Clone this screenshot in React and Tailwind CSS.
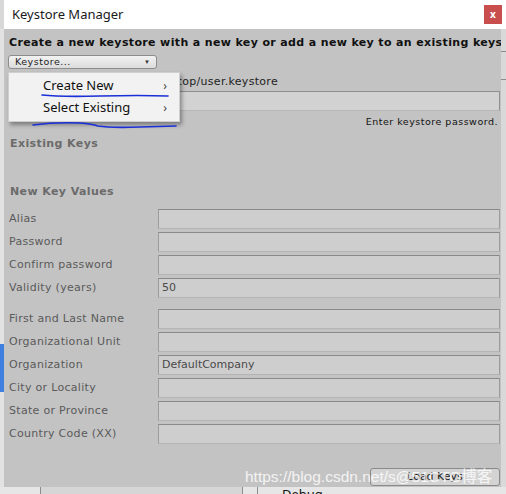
import React from 'react';

const LABEL_FONT = { fontFamily: '"DejaVu Sans", Verdana, sans-serif' };
const UI_FONT = { fontFamily: '"Noto Sans", "Open Sans", sans-serif' };

const Field = ({ value }) => (
    <div className="w-[342px] h-[20px] bg-[#cecece] border border-[#9c9c9c] border-t-[#8a8a8a] border-b-[#b4b4b4] flex items-center px-[3px] text-[11px] text-[#4a4a4a]" style={LABEL_FONT}>
        {value}
    </div>
);

const Row = ({ label, value }) => (
    <div className="flex items-center h-[20px]">
        <div className="w-[149px] text-[11px] text-[#5a5a5a] tracking-[0.3px]" style={LABEL_FONT}>{label}</div>
        <Field value={value} />
    </div>
);

const App = () => {
    return (
        <div className="relative w-[506px] h-[494px] overflow-hidden bg-[#e4e4e4] flex flex-col">
            <div className="flex flex-1">
                {/* left strip of the app behind */}
                <div className="w-[4px] flex flex-col">
                    <div className="h-[29px] bg-[#d8d8d8]" />
                    <div className="flex-1 bg-[#e2e2e2] flex flex-col">
                        <div className="h-[315px]" />
                        <div className="h-[48px] bg-[#3f7fe0]" />
                    </div>
                </div>

                {/* window */}
                <div className="flex-1 flex flex-col">
                    <div className="h-[29px] bg-white flex items-center justify-between pl-[8px] pr-[4px]">
                        <span className="text-[13px] text-[#1a1a1a]" style={UI_FONT}>Keystore Manager</span>
                        <div className="w-[18px] h-[19px] bg-[#c94f4f] flex items-center justify-center text-white text-[10px] font-bold leading-none pb-[1px]" style={UI_FONT}>x</div>
                    </div>
                    <div className="flex flex-1">
                        <div className="w-[497px] bg-[#c3c3c3] flex flex-col pl-[5px] overflow-hidden">
                            <div className="mt-[7px] h-[14px] flex items-center whitespace-nowrap text-[11px] font-bold text-[#111] tracking-[0.36px]" style={LABEL_FONT}>
                                Create a new keystore with a new key or add a new key to an existing keystore
                            </div>
                            <div className="mt-[5px] ml-[-1px] w-[149px] h-[14px] rounded-[3px] border border-[#8d8d8d] bg-gradient-to-b from-[#f2f2f2] to-[#dcdcdc] flex items-center justify-between px-[6px]">
                                <span className="text-[9.5px] text-[#222] tracking-[0.5px]" style={LABEL_FONT}>Keystore...</span>
                                <span className="text-[6px] text-[#333]">▼</span>
                            </div>
                            <div className="mt-[7px] h-[13px] w-[269px] flex items-center justify-end whitespace-nowrap text-[11px] text-[#1e1e1e] tracking-[0.3px]" style={LABEL_FONT}>
                                C:/Users/Desktop/user.keystore
                            </div>
                            <div className="mt-[2px] ml-[149px] w-[342px] h-[20px] bg-[#d2d2d2] border border-[#8f8f8f] border-b-[#b8b8b8]" />
                            <div className="mt-[4px] w-[489px] text-right text-[9.5px] text-[#111] tracking-[0.5px]" style={LABEL_FONT}>Enter keystore password.</div>
                            <div className="mt-[7px] ml-[1px] text-[11px] font-bold text-[#6b6b6b] tracking-[0.4px]" style={LABEL_FONT}>Existing Keys</div>
                            <div className="mt-[31px] ml-[1px] text-[11px] font-bold text-[#6b6b6b] tracking-[0.4px]" style={LABEL_FONT}>New Key Values</div>
                            <div className="mt-[9px] flex flex-col gap-[3px]">
                                <Row label="Alias" />
                                <Row label="Password" />
                                <Row label="Confirm password" />
                                <Row label="Validity (years)" value="50" />
                            </div>
                            <div className="mt-[11px] flex flex-col gap-[3px]">
                                <Row label="First and Last Name" />
                                <Row label="Organizational Unit" />
                                <Row label="Organization" value="DefaultCompany" />
                                <Row label="City or Locality" />
                                <Row label="State or Province" />
                                <Row label="Country Code (XX)" />
                            </div>
                            <div className="mt-[24px] ml-[361px] w-[130px] h-[18px] rounded-[3px] border border-[#8a8a8a] bg-[#d3d3d3] flex items-center justify-center text-[11px] text-[#222]" style={LABEL_FONT}>
                                Load Keys
                            </div>
                        </div>
                        {/* right strip of the app behind */}
                        <div className="flex-1 bg-[#d9d9d9] flex flex-col">
                            <div className="h-[22px]" />
                            <div className="h-[1px] bg-[#8c8c8c]" />
                            <div className="h-[27px]" />
                            <div className="h-[1px] bg-[#8c8c8c]" />
                        </div>
                    </div>
                </div>
            </div>

            {/* bottom strip of the app behind */}
            <div className="h-[7px] flex bg-[#e6e6e6]">
                <div className="w-[40px]" />
                <div className="w-[203px] border-x border-[#8c8c8c] bg-[#d6d6d6]" />
                <div className="w-[15px] border-r border-[#8c8c8c]" />
                <div className="pl-[24px] text-[13px] leading-[14px] text-[#111]" style={UI_FONT}>Debug</div>
            </div>

            {/* dropdown menu */}
            <div className="absolute left-[8px] top-[72px] w-[172px] h-[50px] bg-[#f2f2f2] border border-[#cfcfcf] shadow-[2px_3px_4px_rgba(0,0,0,0.35)] flex flex-col py-[2px]" style={UI_FONT}>
                <div className="h-[22px] flex items-center justify-between pl-[34px] pr-[12px] text-[13px] text-[#111]">
                    <span>Create New</span><span className="text-[12px] text-[#444]">›</span>
                </div>
                <div className="h-[22px] flex items-center justify-between pl-[34px] pr-[12px] text-[13px] text-[#111]">
                    <span>Select Existing</span><span className="text-[12px] text-[#444]">›</span>
                </div>
            </div>

            {/* hand drawn underlines */}
            <svg className="absolute left-0 top-0 pointer-events-none" width="506" height="494">
                <path d="M42 95 Q60 97 100 96 Q140 95 168 96" fill="none" stroke="#1a2fd6" strokeWidth="1.6" strokeLinecap="round" />
                <path d="M33 125 Q55 122 80 123 Q92 124 98 126 Q110 128 140 127 L176 126" fill="none" stroke="#1a2fd6" strokeWidth="1.6" strokeLinecap="round" />
            </svg>

            {/* watermark */}
            <div className="absolute left-[245px] top-[465px] whitespace-nowrap text-[15.5px] text-white/80" style={{ fontFamily: '"Liberation Sans", Arial, "Noto Sans CJK SC", sans-serif' }}>
                https://blog.csdn.net/s@51CTO博客
            </div>
        </div>
    );
};

export default App;
